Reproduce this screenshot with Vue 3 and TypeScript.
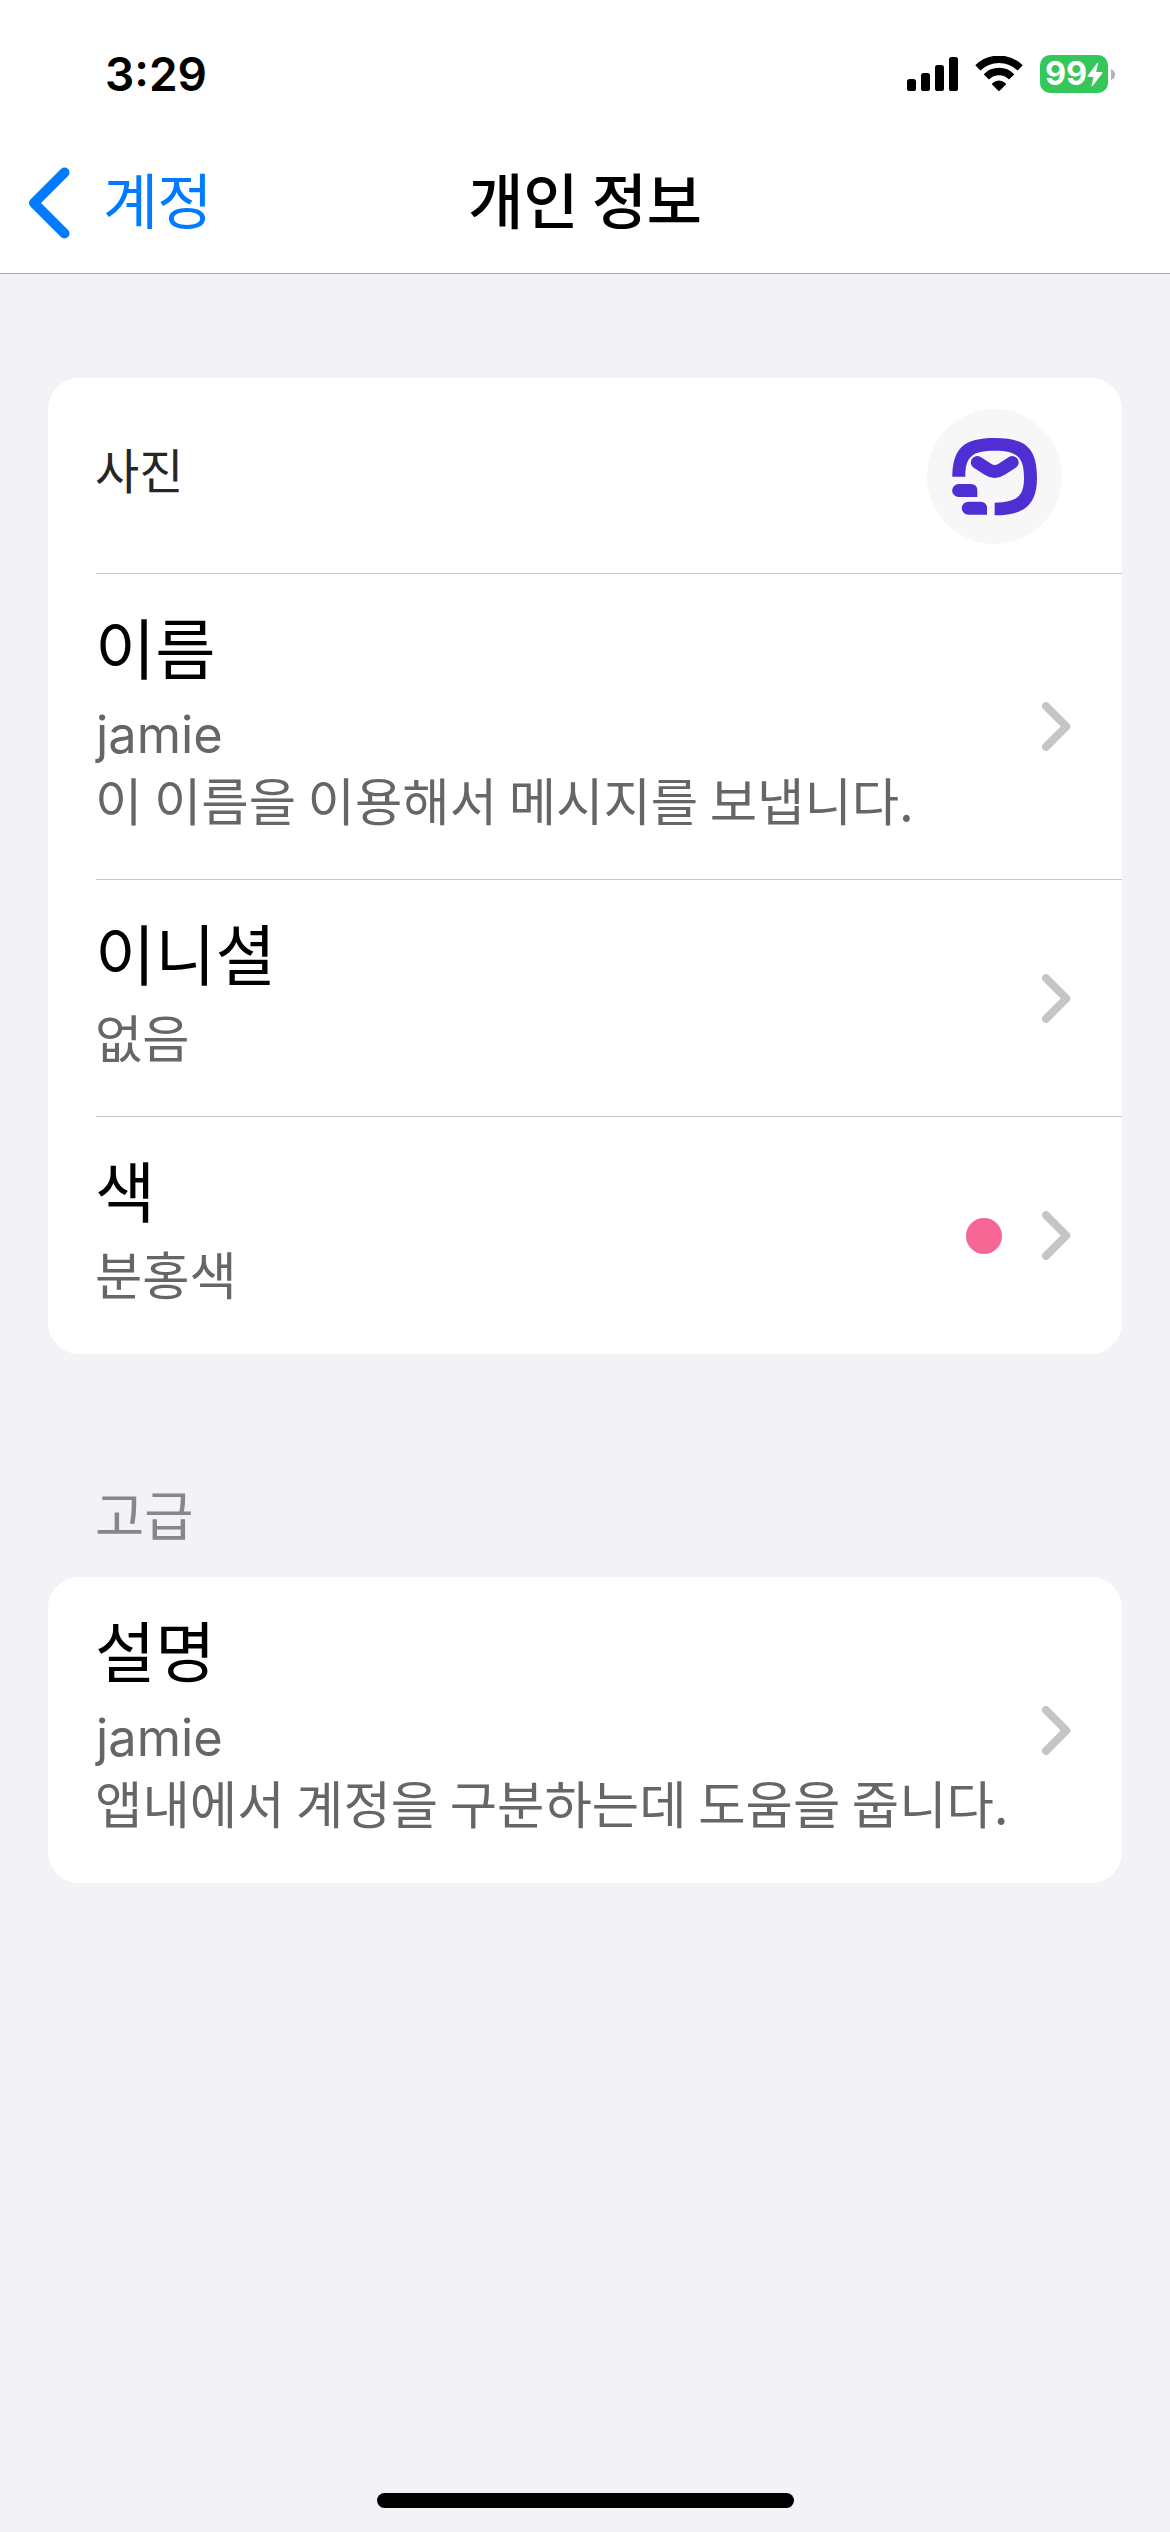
<script setup lang="ts">
interface Row {
  title: string
  value: string
  latin?: boolean
  note?: string
  color?: string
}

const profileRows: Row[] = [
  { title: '이름', value: 'jamie', latin: true, note: '이 이름을 이용해서 메시지를 보냅니다.' },
  { title: '이니셜', value: '없음' },
  { title: '색', value: '분홍색', color: '#f66694' },
]

const advancedRows: Row[] = [
  { title: '설명', value: 'jamie', latin: true, note: '앱내에서 계정을 구분하는데 도움을 줍니다.' },
]

const sections: { heading?: string; photo?: string; rows: Row[] }[] = [
  { photo: '사진', rows: profileRows },
  { heading: '고급', rows: advancedRows },
]
</script>

<template>
  <div class="screen">
    <header class="top">
      <div class="status">
        <span class="time">3:29</span>
        <div class="indicators">
          <svg class="signal" viewBox="0 0 51 34">
            <rect x="0" y="22" width="9" height="12" rx="2.6" />
            <rect x="14" y="16" width="9" height="18" rx="2.6" />
            <rect x="28" y="8" width="9" height="26" rx="2.6" />
            <rect x="42" y="0" width="9" height="34" rx="2.6" />
          </svg>
          <svg class="wifi" viewBox="285 78 144 108">
            <path d="M293.5 113.5A91 91 0 0 1 420.5 113.5" fill="none" stroke="#000" stroke-width="22" />
            <path d="M319 140.500A53 53 0 0 1 395 140.500" fill="none" stroke="#000" stroke-width="22" />
            <path d="M337 160Q357 143 377 160Q379 162 377 164L359 182Q357 184 355 182L337 164Q335 162 337 160Z" />
          </svg>
          <div class="battery">
            <div class="battery-body">
              <span>99</span>
              <svg class="bolt" viewBox="623 98 49 75">
                <path d="M654 100Q658 98 657 102L651 128H669Q672 129 670 132L640 171Q636 174 637 169L643 143H626Q623 142 625 139Z" />
              </svg>
            </div>
            <svg class="nub" viewBox="0 0 4 11"><path d="M0 0Q4 1.500 4 5.500T0 11Z" fill="#b3b3b3" /></svg>
          </div>
        </div>
      </div>
      <nav class="nav">
        <a class="back">
          <svg class="back-icon" viewBox="0 0 42 72">
            <path d="M36.500 5.500L6 36L36.500 66.500" fill="none" stroke="#007aff" stroke-width="10" stroke-linecap="round" stroke-linejoin="round" />
          </svg>
          <span>계정</span>
        </a>
        <h1>개인 정보</h1>
      </nav>
    </header>

    <main class="content">
      <section v-for="(section, i) in sections" :key="i">
        <h2 v-if="section.heading">{{ section.heading }}</h2>
        <div class="card">
          <div v-if="section.photo" class="row photo-row">
            <span class="photo-label">{{ section.photo }}</span>
            <div class="avatar">
              <svg viewBox="81 117 405 405">
                <g fill="#4f2ed4">
                  <path d="M157 320C158 235 191 204 284 204C379 204 411 236 411 324C411 405 372 436 284 436V398C350 397 372 380 372 324C372 261 352 242 284 242C217 242 196 259 196 320Z" />
                  <path d="M176 342H212Q232 342 232 362V381H176A19.500 19.500 0 0 1 176 342Z" />
                  <path d="M205 395H241Q261 395 261 415V434H205A19.500 19.500 0 0 1 205 395Z" />
                </g>
                <path d="M231.500 277L263 297.500Q284 311.500 305 297.500L337 277" fill="none" stroke="#4f2ed4" stroke-width="38" stroke-linecap="round" />
              </svg>
            </div>
          </div>
          <div v-for="row in section.rows" :key="row.title" class="row">
            <div class="texts">
              <div class="title">{{ row.title }}</div>
              <div class="value" :class="{ latin: row.latin }">{{ row.value }}</div>
              <div v-if="row.note" class="note">{{ row.note }}</div>
            </div>
            <div class="accessory">
              <i v-if="row.color" class="swatch" :style="{ background: row.color }"></i>
              <svg class="chevron" viewBox="0 0 29 49">
                <path d="M4 4.100L24.300 24.500L4 44.900" fill="none" stroke="#c5c5c7" stroke-width="8" stroke-linecap="round" stroke-linejoin="round" />
              </svg>
            </div>
          </div>
        </div>
      </section>
    </main>

    <div class="home-indicator"></div>
  </div>
</template>

<style>
body {
  background: #f2f2f7;
}
</style>

<style scoped>
.screen {
  width: 1170px;
  height: 2532px;
  display: flex;
  flex-direction: column;
  background: #f2f2f7;
  color: #000;
  font-family: 'Noto Sans CJK KR', sans-serif;
  white-space: nowrap;
}
svg {
  display: block;
  flex: none;
}
.top {
  height: 273px;
  background: #fff;
  border-bottom: 1px solid #a8a8ad;
}
.status {
  height: 148px;
  padding: 0 55px 0 105px;
  display: flex;
  justify-content: space-between;
  align-items: center;
  box-sizing: border-box;
}
.time {
  font: 600 46px/60px Inter, sans-serif;
}
.indicators {
  display: flex;
  align-items: center;
}
.signal {
  width: 51px;
  height: 34px;
}
.wifi {
  width: 48px;
  height: 36px;
  margin: 0 17px;
}
.battery {
  display: flex;
  align-items: center;
  gap: 3px;
}
.battery-body {
  width: 68px;
  height: 38px;
  padding-left: 5px;
  box-sizing: border-box;
  border-radius: 10px;
  background: #35c759;
  color: #fff;
  display: flex;
  align-items: center;
  font: 700 32.5px/38px Inter, sans-serif;
}
.bolt {
  width: 16px;
  height: 25px;
  fill: #fff;
}
.nub {
  width: 4px;
  height: 11px;
}
.nav {
  height: 125px;
  display: grid;
  grid-template-columns: 1fr auto 1fr;
  font-size: 60px;
  line-height: 80px;
  padding-top: 10px;
  box-sizing: border-box;
}
.back {
  display: flex;
  padding-left: 28px;
  color: #007aff;
  gap: 33px;
  letter-spacing: -1px;
}
.back-icon {
  width: 42px;
  height: 72px;
  margin-top: 9px;
}
h1 {
  margin: 0;
  font-size: 60px;
  font-weight: 500;
  letter-spacing: -0.2px;
}
.content {
  padding: 104px 48px 0;
}
h2 {
  margin: 129px 0 34px 47px;
  font-size: 53.5px;
  line-height: 60px;
  font-weight: 400;
  color: #86868b;
}
.card {
  padding-left: 48px;
  border-radius: 31px;
  background: #fff;
}
.row {
  display: flex;
  justify-content: space-between;
  border-bottom: 1px solid #c5c5c7;
}
.row:last-child {
  border-bottom: 0;
}
.photo-row {
  height: 195px;
}
.photo-label {
  margin: 60px 0 0 -1px;
  font-size: 48px;
  line-height: 60px;
  color: #262626;
}
.avatar {
  width: 135px;
  height: 135px;
  margin: 31px 60px 0 0;
  border-radius: 50%;
  background: #f7f7f7;
}
.texts {
  margin-left: -1px;
  padding: 33px 0 46px;
}
.row:last-child .texts {
  padding-bottom: 47px;
}
.title {
  font-size: 65.5px;
  line-height: 78px;
}
.value {
  margin-top: 11px;
  font-size: 51.4px;
  line-height: 68px;
  color: #666;
}
.value.latin {
  margin: 19px 0 0 1px;
  font-family: Inter, sans-serif;
  font-size: 50.6px;
  line-height: 62px;
}
.note {
  margin-top: -1px;
  font-size: 51.5px;
  line-height: 68px;
  color: #666;
}
.accessory {
  display: flex;
  align-items: center;
  gap: 40px;
  padding-right: 51px;
}
.swatch {
  width: 36px;
  height: 36px;
  border-radius: 50%;
}
.chevron {
  width: 29px;
  height: 49px;
}
.home-indicator {
  width: 417px;
  height: 15px;
  margin: auto auto 24px;
  border-radius: 8px;
  background: #000;
}
</style>
